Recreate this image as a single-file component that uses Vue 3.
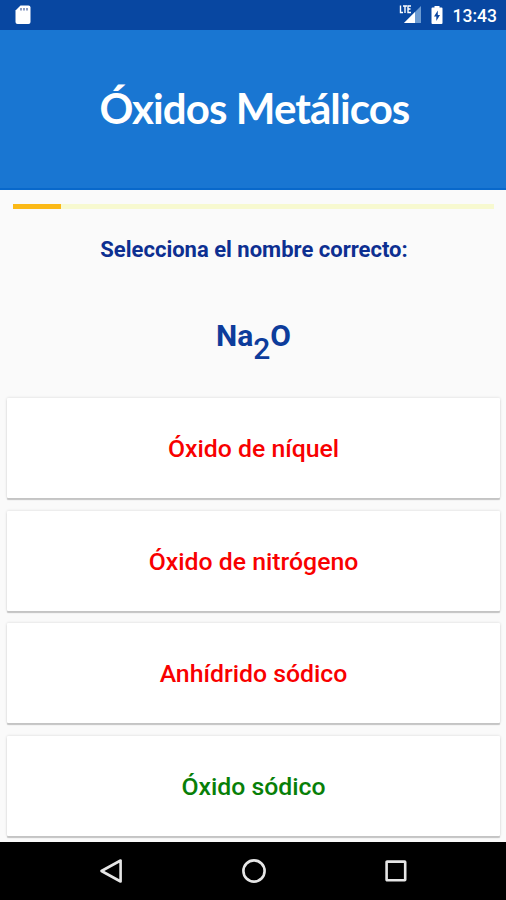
<template>
  <div class="screen">
    <div class="status-bar">
      <svg class="sd-icon" viewBox="0 0 16 20">
        <path d="M5.5 0.5H13.5Q15.5 0.5 15.5 2.5V17Q15.5 19 13.5 19H2.5Q0.5 19 0.5 17V5.5Z" fill="#fff" />
        <path d="M6 3v2.5M9 3v2.5M12 3v2.5" stroke="#7186b5" stroke-width="1.6" />
      </svg>
      <div class="status-right">
        <svg class="signal-icon" viewBox="0 0 24 20">
          <path d="M22 1V18H5Z" fill="#6c9bd2" />
          <path d="M16 7V18H5Z" fill="#fff" />
          <path d="M1.5 0.5V7.5H4M4 1H8M6 1V8M12 1H9V7.5H12M9 4H11.5" fill="none" stroke="#fff" stroke-width="1.4" />
        </svg>
        <svg class="battery-icon" viewBox="0 0 12 18">
          <path d="M3.5 0H8.5V1.5H10.5Q11.5 1.5 11.5 2.5V17Q11.5 18 10.5 18H1.5Q0.5 18 0.5 17V2.5Q0.5 1.5 1.5 1.5H3.5Z" fill="#fff" />
          <path d="M6.8 4.5L3 10.5H5.3V15L9 9H6.8Z" fill="#0d47a1" />
        </svg>
        <span class="clock">13:43</span>
      </div>
    </div>

    <header class="header">
      <h1>Óxidos Metálicos</h1>
    </header>

    <main class="quiz">
      <div class="progress">
        <div class="progress-value" :style="{ width: progress + '%' }"></div>
      </div>
      <p class="question">Selecciona el nombre correcto:</p>
      <p class="formula">Na<span class="sub">2</span>O</p>
      <div class="answers">
        <button
          v-for="answer in answers"
          :key="answer.text"
          class="answer"
          :class="{ correct: answer.correct }"
        >
          {{ answer.text }}
        </button>
      </div>
    </main>

    <nav class="nav-bar">
      <svg viewBox="0 0 24 24">
        <path d="M21.6 1.5V22.5L2.5 12Z" />
      </svg>
      <svg viewBox="0 0 24 24">
        <circle cx="12" cy="12" r="10.6" />
      </svg>
      <svg viewBox="0 0 24 24">
        <rect x="2.6" y="2.6" width="18.6" height="18.6" rx="0.5" />
      </svg>
    </nav>
  </div>
</template>

<script setup>
import { ref } from 'vue'

const progress = ref(10)

const answers = ref([
  { text: 'Óxido de níquel', correct: false },
  { text: 'Óxido de nitrógeno', correct: false },
  { text: 'Anhídrido sódico', correct: false },
  { text: 'Óxido sódico', correct: true }
])
</script>

<style>
body {
  margin: 0;
}
</style>

<style scoped>
.screen {
  display: flex;
  flex-direction: column;
  width: 506px;
  height: 900px;
  overflow: hidden;
  background: #fafafa;
  font-family: Roboto, sans-serif;
}

.status-bar {
  display: flex;
  flex: none;
  align-items: center;
  justify-content: space-between;
  box-sizing: border-box;
  height: 30px;
  padding: 0 9px 0 15px;
  background: #0847a1;
  color: #fff;
}

.sd-icon {
  width: 16px;
  height: 20px;
}

.status-right {
  display: flex;
  align-items: center;
}

.signal-icon {
  width: 24px;
  height: 20px;
  margin-right: 8px;
}

.battery-icon {
  width: 12px;
  height: 18px;
  margin-right: 10px;
}

.clock {
  font-size: 17.5px;
  font-weight: 500;
  line-height: 30px;
  padding-top: 2px;
}

.header {
  display: flex;
  flex: none;
  align-items: center;
  justify-content: center;
  box-sizing: border-box;
  height: 160px;
  padding: 0 0 2px 3px;
  border-bottom: 2px solid #0868cb;
  background: #1976d2;
}

h1 {
  margin: 0;
  color: #fff;
  font-family: Lato, sans-serif;
  font-size: 42px;
  font-weight: 700;
  letter-spacing: -0.9px;
  line-height: 50px;
  white-space: nowrap;
}

.quiz {
  flex: 1;
  min-height: 0;
  overflow: hidden;
}

.progress {
  height: 5px;
  margin: 14px 12px 0 13px;
  background: #f7f9d0;
}

.progress-value {
  height: 100%;
  background: #fbb917;
}

.question {
  margin: 25px 0 0;
  padding-left: 2px;
  color: #0d2f91;
  font-size: 22px;
  font-weight: 700;
  line-height: 31px;
  text-align: center;
}

.formula {
  margin: 51px 0 0;
  padding-left: 1px;
  color: #0d3c9b;
  font-size: 30px;
  font-weight: 700;
  line-height: 40px;
  text-align: center;
}

.sub {
  position: relative;
  top: 13px;
  font-weight: 500;
}

.answers {
  display: flex;
  flex-direction: column;
  gap: 12.5px;
  padding: 42px 6px 0 7px;
}

.answer {
  flex: none;
  height: 100px;
  padding: 2px 0 0;
  border: none;
  border-radius: 1px;
  background: #fff;
  box-shadow: 0 2px 1px #c4c4c4, 0 0 3px rgba(0, 0, 0, 0.15);
  color: #f80000;
  font-family: inherit;
  font-size: 24.8px;
  font-weight: 500;
  line-height: 30px;
}

.answer.correct {
  color: #087f08;
}

.nav-bar {
  display: flex;
  flex: none;
  align-items: center;
  justify-content: space-between;
  box-sizing: border-box;
  height: 58px;
  padding: 0 98px 0 99px;
  background: #000;
}

.nav-bar svg {
  width: 24px;
  height: 24px;
  fill: none;
  stroke: #e6e6e6;
  stroke-width: 2.6;
  stroke-linejoin: round;
}
</style>
